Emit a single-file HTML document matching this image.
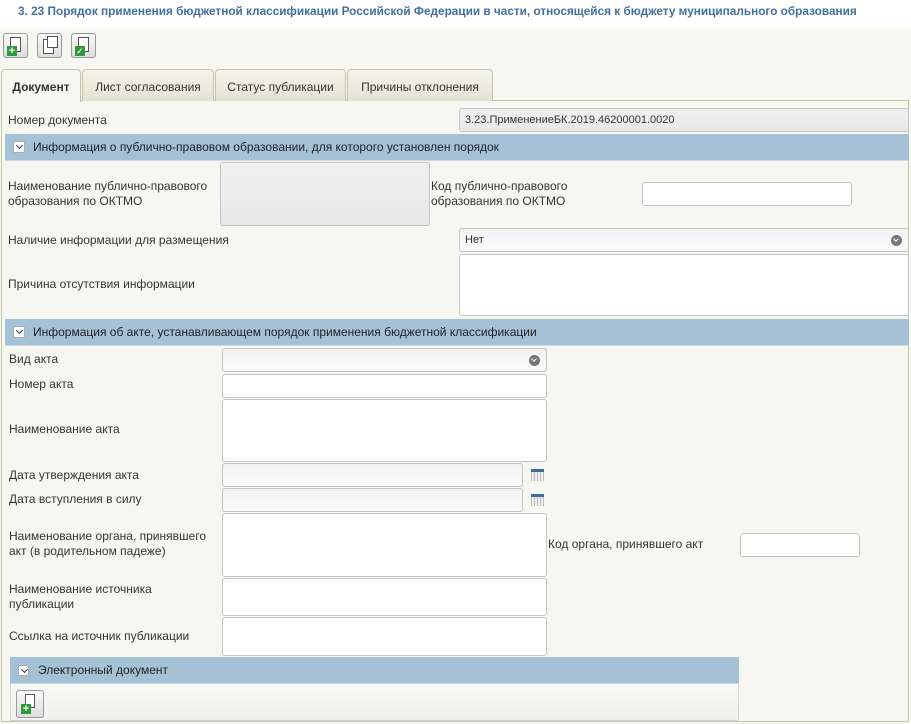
<!DOCTYPE html>
<html><head><meta charset="utf-8"><style>
*{box-sizing:border-box;margin:0;padding:0}
body{width:911px;height:724px;overflow:hidden;background:#f7f7f2;font-family:"Liberation Sans",sans-serif;font-size:12px;color:#333;position:relative}
.a{position:absolute}
.t{position:absolute;font-size:12px;color:#333;line-height:15px;white-space:nowrap}
.in{position:absolute;background:#fff;border:1px solid #c4c4c4;border-radius:3px}
.gr{background:linear-gradient(#f0f0f0,#e8e8e8)}
.dis{background:linear-gradient(#f2f2f2,#fafafa)}
.hdr{position:absolute;background:#a5c1d6;color:#222;font-size:12px;line-height:26px;padding-left:28px;border-bottom:1px solid #c9d9e5}
.chev{position:absolute;left:8px;top:7px;width:12px;height:12px;background:#fff;border:1px solid #aab;border-radius:2px}
.chev:after{content:"";position:absolute;left:3px;top:1px;width:4px;height:4px;border-right:1.5px solid #335;border-bottom:1.5px solid #335;transform:rotate(45deg)}
.btn{position:absolute;top:33px;width:25px;height:25px;border:1px solid #999;border-radius:3px;background:linear-gradient(#fafafa,#ddd)}
.pg{position:absolute;left:6px;top:3px;width:11px;height:15px;border:1px solid #555;background:#fff}
.tab{position:absolute;top:69px;height:32px;border:1px solid #c6c6a6;border-bottom:none;border-radius:4px 4px 0 0;background:linear-gradient(#f4f4ea,#e3e3d3);text-align:center;line-height:34px;font-size:12px;color:#333}
.dd{position:absolute;right:6px;top:6px;width:11px;height:11px;border-radius:50%;background:#777}
.dd:after{content:"";position:absolute;left:3px;top:2px;width:3px;height:3px;border-right:1.5px solid #fff;border-bottom:1.5px solid #fff;transform:rotate(45deg)}
.cal{position:absolute;width:13px;height:12px;border-top:3px solid #3b6fa0;background:repeating-linear-gradient(90deg,#bbb 0 1px,#eee 1px 3px)}
</style></head><body>
<div class="a" style="left:0;top:0;width:911px;height:28px;background:#fff"></div>
<div class="t" style="left:18px;top:4px;font-weight:bold;color:#41709e;font-size:11.8px">3. 23 Порядок применения бюджетной классификации Российской Федерации в части, относящейся к бюджету муниципального образования</div>

<div class="btn" style="left:3px"><div class="pg"></div><div class="a" style="left:3px;top:12px;width:10px;height:10px;background:#2e9a3a;color:#fff;font-weight:bold;font-size:11px;line-height:10px;text-align:center">+</div></div>
<div class="btn" style="left:37px"><div class="pg" style="left:5px;top:5px"></div><div class="pg" style="left:9px;top:2px;height:12px"></div></div>
<div class="btn" style="left:71px"><div class="pg"></div><div class="a" style="left:3px;top:12px;width:10px;height:10px;background:#2e9a3a;color:#fff;font-size:9px;line-height:10px;text-align:center">✓</div></div>

<div class="a" style="left:1px;top:100px;width:908px;height:622px;border:1px solid #c6c6a6;background:#f7f7f2"></div>
<div class="tab" style="left:1px;width:80px;height:33px;background:#f7f7f2;font-weight:bold">Документ</div>
<div class="tab" style="left:82px;width:132px">Лист согласования</div>
<div class="tab" style="left:215px;width:131px">Статус публикации</div>
<div class="tab" style="left:347px;width:146px">Причины отклонения</div>

<div class="t" style="left:8px;top:113px">Номер документа</div>
<div class="in gr" style="left:459px;top:108px;width:450px;height:24px"><span class="t" style="left:5px;top:4px;font-size:11px">3.23.ПрименениеБК.2019.46200001.0020</span></div>

<div class="hdr" style="left:5px;top:134px;width:904px;height:27px"><div class="chev"></div>Информация о публично-правовом образовании, для которого установлен порядок</div>
<div class="t" style="left:8px;top:179px">Наименование публично-правового<br>образования по ОКТМО</div>
<div class="in gr" style="left:220px;top:162px;width:210px;height:64px"></div>
<div class="t" style="left:431px;top:179px">Код публично-правового<br>образования по ОКТМО</div>
<div class="in" style="left:642px;top:182px;width:210px;height:24px"></div>
<div class="t" style="left:8px;top:233px">Наличие информации для размещения</div>
<div class="in dis" style="left:459px;top:228px;width:450px;height:24px"><span class="t" style="left:5px;top:4px;font-size:11px">Нет</span><div class="dd"></div></div>
<div class="t" style="left:8px;top:277px">Причина отсутствия информации</div>
<div class="in" style="left:459px;top:254px;width:450px;height:62px"></div>

<div class="hdr" style="left:5px;top:319px;width:904px;height:27px"><div class="chev"></div>Информация об акте, устанавливающем порядок применения бюджетной классификации</div>
<div class="t" style="left:9px;top:352px">Вид акта</div>
<div class="in dis" style="left:222px;top:348px;width:325px;height:24px"><div class="dd"></div></div>
<div class="t" style="left:9px;top:377px">Номер акта</div>
<div class="in" style="left:222px;top:374px;width:325px;height:24px"></div>
<div class="t" style="left:9px;top:422px">Наименование акта</div>
<div class="in" style="left:222px;top:399px;width:325px;height:63px"></div>
<div class="t" style="left:9px;top:468px">Дата утверждения акта</div>
<div class="in dis" style="left:222px;top:463px;width:301px;height:24px"></div>
<div class="cal" style="left:531px;top:469px"></div>
<div class="t" style="left:9px;top:492px">Дата вступления в силу</div>
<div class="in dis" style="left:222px;top:488px;width:301px;height:24px"></div>
<div class="cal" style="left:531px;top:494px"></div>
<div class="t" style="left:9px;top:529px">Наименование органа, принявшего<br>акт (в родительном падеже)</div>
<div class="in" style="left:222px;top:513px;width:325px;height:64px"></div>
<div class="t" style="left:548px;top:537px">Код органа, принявшего акт</div>
<div class="in" style="left:740px;top:533px;width:120px;height:24px"></div>
<div class="t" style="left:9px;top:582px">Наименование источника<br>публикации</div>
<div class="in" style="left:222px;top:578px;width:325px;height:38px"></div>
<div class="t" style="left:9px;top:629px">Ссылка на источник публикации</div>
<div class="in" style="left:222px;top:617px;width:325px;height:39px"></div>

<div class="a" style="left:10px;top:657px;width:729px;height:64px;background:linear-gradient(#fff,#f0f0ec);border:1px solid #d4d4d4"></div>
<div class="hdr" style="left:10px;top:657px;width:729px;height:27px"><div class="chev" style="top:8px;width:11px;height:11px"></div>Электронный документ</div>
<div class="a" style="left:16px;top:690px;width:28px;height:28px;border:1px solid #999;border-radius:3px;background:linear-gradient(#fafafa,#ddd)"><div class="pg" style="left:8px;top:3px;width:10px;height:14px"></div><div class="a" style="left:4px;top:13px;width:10px;height:10px;background:#2e9a3a;color:#fff;font-weight:bold;font-size:11px;line-height:10px;text-align:center">+</div></div>
</body></html>
